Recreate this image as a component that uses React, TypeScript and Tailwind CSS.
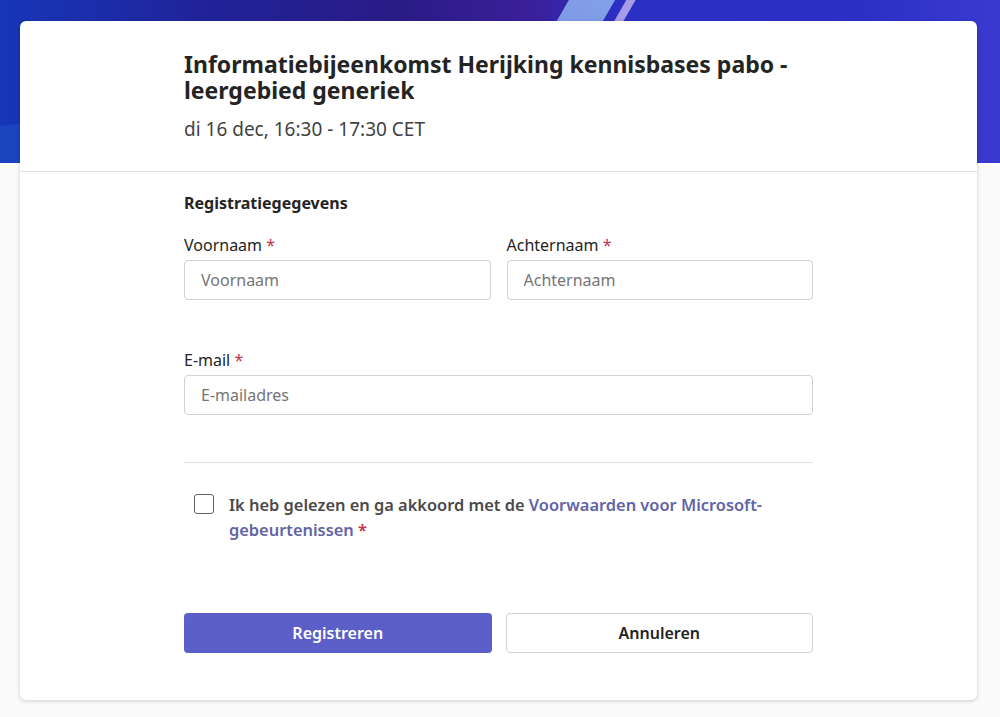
import { useState } from 'react';

const font = { fontFamily: '"Noto Sans", "Open Sans", Arial, sans-serif' };

function Banner() {
    return (
        <div className="relative h-[163px] overflow-hidden bg-[linear-gradient(90deg,#1736b8_0%,#20239a_20%,#2a1b86_40%,#3a1f9a_53%,#2b30c4_62%,#2b2fc6_85%,#3a3ad0_100%)]">
            {/* light streaks */}
            <div className="absolute left-[520px] top-[-40px] h-[260px] w-[40px] rotate-[30deg] bg-[linear-gradient(180deg,#8fb1f0,#6d7fe0)] opacity-90" />
            <div className="absolute left-[575px] top-[-40px] h-[260px] w-[8px] rotate-[30deg] bg-[#c5b8f0] opacity-80" />
            <div className="absolute left-[-80px] top-[110px] h-[120px] w-[400px] rotate-[-8deg] bg-[#1c4fc4] opacity-60" />
        </div>
    );
}

function Field({ label, placeholder }: { label: string; placeholder: string }) {
    return (
        <label className="flex flex-col">
            <span className="text-[16px] leading-[20px] text-[#242424]">
                {label} <span className="text-[#c4314b]">*</span>
            </span>
            <input
                placeholder={placeholder}
                className="mt-[5px] h-[40px] rounded-[4px] border border-[#d1d1d1] bg-white px-[16px] text-[16px] text-[#242424] outline-none placeholder:text-[#757575]"
                style={font}
            />
        </label>
    );
}

export default function App() {
    const [agreed, setAgreed] = useState(false);

    return (
        <div className="min-h-[717px] bg-[#fafafa]" style={font}>
            <Banner />
            <div className="relative z-10 mx-[20px] mt-[-142px] mr-[23px] rounded-[6px] bg-white shadow-[0_1px_4px_rgba(0,0,0,0.18)]">
                {/* Heading */}
                <div className="border-b border-[#e0e0e0] px-[164px] pt-[30px] pb-[30px]">
                    <h1 className="text-[23px] font-bold leading-[26px] text-[#242424]">
                        Informatiebijeenkomst Herijking kennisbases pabo - leergebied generiek
                    </h1>
                    <p className="mt-[14px] text-[19px] leading-[24px] text-[#424242]">di 16 dec, 16:30 - 17:30 CET</p>
                </div>

                {/* Form */}
                <div className="px-[164px] pt-[20px] pb-[47px]">
                    <h2 className="text-[16px] font-bold leading-[22px] text-[#242424]">Registratiegegevens</h2>
                    <div className="mt-[21px] grid grid-cols-2 gap-[16px]">
                        <Field label="Voornaam" placeholder="Voornaam" />
                        <Field label="Achternaam" placeholder="Achternaam" />
                    </div>
                    <div className="mt-[50px]">
                        <Field label="E-mail" placeholder="E-mailadres" />
                    </div>
                    <div className="mt-[47px] border-t border-[#e0e0e0]" />

                    <div className="mt-[29px] flex items-start gap-[15px] pl-[10px]">
                        <button
                            onClick={() => setAgreed(!agreed)}
                            className="mt-[2px] h-[20px] w-[20px] shrink-0 rounded-[3px] border border-[#616161] bg-white"
                        >
                            {agreed && (
                                <svg viewBox="0 0 20 20" className="h-full w-full">
                                    <path d="M5 10l3 3 7-7" fill="none" stroke="#5b5fc7" strokeWidth="2" />
                                </svg>
                            )}
                        </button>
                        <p className="text-[16.4px] font-semibold leading-[25px] text-[#4a4a4a]">
                            Ik heb gelezen en ga akkoord met de{' '}
                            <span className="text-[#6264a7]">Voorwaarden voor Microsoft-gebeurtenissen</span>{' '}
                            <span className="text-[#c4314b]">*</span>
                        </p>
                    </div>

                    <div className="mt-[71px] grid grid-cols-2 gap-[14px]">
                        <button className="h-[40px] rounded-[4px] bg-[#5b5fc7] text-[16px] font-semibold text-white">
                            Registreren
                        </button>
                        <button className="h-[40px] rounded-[4px] border border-[#d1d1d1] bg-white text-[16px] font-semibold text-[#242424]">
                            Annuleren
                        </button>
                    </div>
                </div>
            </div>
        </div>
    );
}
